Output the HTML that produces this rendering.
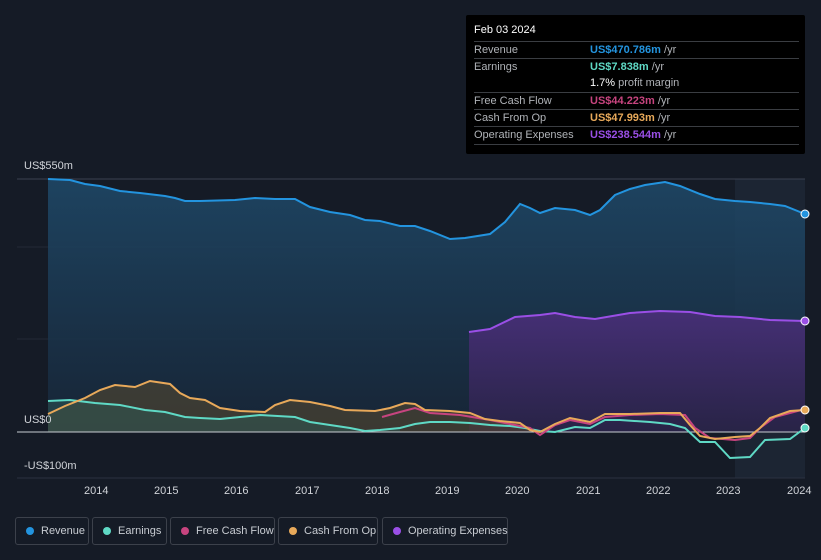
<!DOCTYPE html>
<html><head><meta charset="utf-8"><style>
body{margin:0;background:#151b26;width:821px;height:560px;overflow:hidden;font-family:"Liberation Sans",sans-serif;position:relative}
.tt{position:absolute;left:466px;top:15px;width:339px;height:139px;background:#000;border-radius:2px;color:#b0b3b8;font-size:11px}
.tt .h{color:#fff;padding:9px 8px 0;height:17px}
.row{position:absolute;left:8px;right:6px;border-top:1px solid #3a3d42;height:17px;line-height:17px}
.row span.l{position:absolute;left:0}
.row span.v{position:absolute;left:116px}
.lg{position:absolute;top:517px;height:28px;border:1px solid #3c414b;border-radius:3px;color:#c8ccd2;font-size:11px;line-height:26px;box-sizing:border-box;white-space:nowrap}
.lg i{position:absolute;left:10px;top:9px;width:8px;height:8px;border-radius:50%}
.lg span{position:absolute;left:25px}
.ax{position:absolute;color:#d0d3d8;font-size:11px}
</style></head><body>
<svg width="821" height="560" style="position:absolute;left:0;top:0">
<rect x="735" y="179" width="70" height="299" fill="#1c2533"/>
<line x1="17" y1="179" x2="805" y2="179" stroke="#3a4150"/>
<line x1="17" y1="247" x2="805" y2="247" stroke="#222a36"/>
<line x1="17" y1="339" x2="805" y2="339" stroke="#222a36"/>
<line x1="17" y1="478" x2="805" y2="478" stroke="#2a3140"/>
<defs>
<linearGradient id="gr" x1="0" y1="0" x2="0" y2="1"><stop offset="0" stop-color="#1f4a6a"/><stop offset="1" stop-color="#172638"/></linearGradient>
<linearGradient id="go" x1="0" y1="0" x2="0" y2="1"><stop offset="0" stop-color="#4a2f7a"/><stop offset="1" stop-color="#2a2348"/></linearGradient>
</defs>
<path d="M48,179 L70,180 85,184 100,186 120,191 140,193 165,196 175,198 185,201 200,201 235,200 255,198 275,199 295,199 310,207 330,212 350,215 365,220 380,221 400,226 415,226 430,231 450,239 465,238 490,234 505,222 520,204 530,208 540,213 555,208 575,210 590,215 600,210 615,195 630,189 645,185 665,182 680,186 700,194 715,199 735,201 750,202 770,204 785,206 805,214 L805,432 L48,432Z" fill="url(#gr)" opacity="0.85"/>
<path d="M469,332 L490,329 515,317 540,315 555,313 575,317 595,319 630,313 660,311 690,312 715,316 740,317 770,320 805,321 L805,432 L469,432Z" fill="url(#go)" opacity="0.9"/>
<path d="M48,414 L65,406 85,398 100,390 115,385 135,387 150,381 170,384 180,393 190,398 205,400 220,408 240,411 265,412 275,405 290,400 310,402 330,406 345,410 375,411 390,408 405,403 415,404 425,410 450,411 470,413 485,419 500,421 520,423 530,430 540,432 L48,432Z" fill="#5a4a30" opacity="0.55"/>
<path d="M48,401 L70,400 95,403 120,405 145,410 165,412 185,417 200,418 220,419 240,417 260,415 295,417 310,422 330,425 350,428 365,431 380,430 400,428 L400,432 L48,432Z" fill="#2e5a55" opacity="0.5"/>
<line x1="17" y1="432" x2="805" y2="432" stroke="#c8ccd2" stroke-width="1"/>
<g fill="none" stroke-width="2">
<path stroke="#2394df" d="M48,179 L70,180 85,184 100,186 120,191 140,193 165,196 175,198 185,201 200,201 235,200 255,198 275,199 295,199 310,207 330,212 350,215 365,220 380,221 400,226 415,226 430,231 450,239 465,238 490,234 505,222 520,204 530,208 540,213 555,208 575,210 590,215 600,210 615,195 630,189 645,185 665,182 680,186 700,194 715,199 735,201 750,202 770,204 785,206 805,214"/>
<path stroke="#9a4fe6" d="M469,332 L490,329 515,317 540,315 555,313 575,317 595,319 630,313 660,311 690,312 715,316 740,317 770,320 805,321"/>
<path stroke="#5fd9c5" d="M48,401 L70,400 95,403 120,405 145,410 165,412 185,417 200,418 220,419 240,417 260,415 295,417 310,422 330,425 350,428 365,431 380,430 400,428 415,424 430,422 450,422 470,423 490,425 510,426 525,428 540,431 555,432 575,427 590,428 605,420 620,420 650,422 670,424 685,428 700,442 715,442 730,458 750,457 765,440 790,439 805,428"/>
<path stroke="#c7447f" d="M382,417 L400,412 415,408 430,413 460,415 490,420 510,424 530,428 540,435 555,425 570,420 590,424 605,417 630,415 660,414 685,415 695,428 710,438 735,440 750,438 760,428 775,417 805,409"/>
<path stroke="#e8a95a" d="M48,414 L65,406 85,398 100,390 115,385 135,387 150,381 170,384 180,393 190,398 205,400 220,408 240,411 265,412 275,405 290,400 310,402 330,406 345,410 375,411 390,408 405,403 415,404 425,410 450,411 470,413 485,419 500,421 520,423 530,430 540,432 555,424 570,418 580,420 590,422 605,414 630,414 660,413 680,413 690,425 700,436 715,439 735,437 750,436 760,428 770,418 790,411 805,410"/>
</g>
<circle cx="805" cy="214" r="4" fill="#2394df" stroke="#fff" stroke-width="1"/>
<circle cx="805" cy="321" r="4" fill="#9a4fe6" stroke="#fff" stroke-width="1"/>
<circle cx="805" cy="410" r="4" fill="#e8a95a" stroke="#fff" stroke-width="1"/>
<circle cx="805" cy="428" r="4" fill="#5fd9c5" stroke="#fff" stroke-width="1"/>
</svg>
<div class="ax" style="left:24px;top:160px">US$550m</div>
<div class="ax" style="left:24px;top:414px">US$0</div>
<div class="ax" style="left:24px;top:460px">-US$100m</div>
<div class="ax" style="left:84px;top:485px">2014</div>
<div class="ax" style="left:154px;top:485px">2015</div>
<div class="ax" style="left:224px;top:485px">2016</div>
<div class="ax" style="left:295px;top:485px">2017</div>
<div class="ax" style="left:365px;top:485px">2018</div>
<div class="ax" style="left:435px;top:485px">2019</div>
<div class="ax" style="left:505px;top:485px">2020</div>
<div class="ax" style="left:576px;top:485px">2021</div>
<div class="ax" style="left:646px;top:485px">2022</div>
<div class="ax" style="left:716px;top:485px">2023</div>
<div class="ax" style="left:787px;top:485px">2024</div>
<div class="tt"><div class="h">Feb 03 2024</div>
<div class="row" style="top:26px"><span class="l">Revenue</span><span class="v"><b style="color:#2394df">US$470.786m</b> /yr</span></div>
<div class="row" style="top:43px"><span class="l">Earnings</span><span class="v"><b style="color:#5fd9c5">US$7.838m</b> /yr</span></div>
<div style="position:absolute;left:124px;top:60px;line-height:17px"><b style="color:#fff;font-weight:normal">1.7%</b> profit margin</div>
<div class="row" style="top:77px"><span class="l">Free Cash Flow</span><span class="v"><b style="color:#c7447f">US$44.223m</b> /yr</span></div>
<div class="row" style="top:94px"><span class="l">Cash From Op</span><span class="v"><b style="color:#e8a95a">US$47.993m</b> /yr</span></div>
<div class="row" style="top:111px"><span class="l">Operating Expenses</span><span class="v"><b style="color:#9a4fe6">US$238.544m</b> /yr</span></div>
<div class="row" style="top:129px;height:0"></div>
</div>
<div class="lg" style="left:15px;width:74px"><i style="background:#2394df"></i><span>Revenue</span></div>
<div class="lg" style="left:92px;width:75px"><i style="background:#5fd9c5"></i><span>Earnings</span></div>
<div class="lg" style="left:170px;width:105px"><i style="background:#c7447f"></i><span>Free Cash Flow</span></div>
<div class="lg" style="left:278px;width:100px"><i style="background:#e8a95a"></i><span>Cash From Op</span></div>
<div class="lg" style="left:382px;width:126px"><i style="background:#9a4fe6"></i><span>Operating Expenses</span></div>
</body></html>
